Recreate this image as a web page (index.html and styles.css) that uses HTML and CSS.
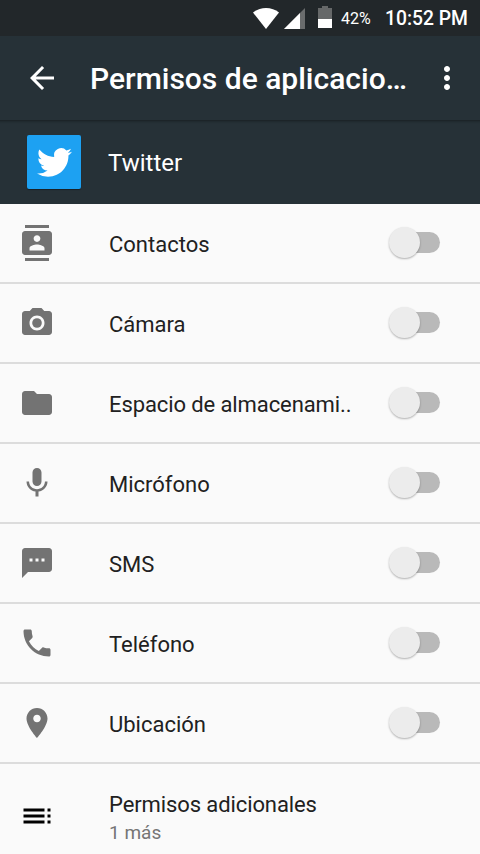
FILE: index.html
```
<!DOCTYPE html>
<html lang="es">
<head>
    <meta charset="UTF-8">
    <meta name="viewport" content="width=device-width, initial-scale=1.0">
    <title>Permisos de aplicaciones</title>
    <link rel="stylesheet" href="styles.css">
</head>
<body>
    <!-- Status bar -->
    <div class="status-bar">
        <svg class="wifi" width="26" height="21" viewBox="0 0 26 21"><path d="M13 21L0 4.6C3.6 1.6 8.1 0 13 0s9.4 1.6 13 4.6z" fill="#fff"/></svg>
        <svg class="signal" width="21" height="21" viewBox="0 0 21 21"><path d="M21 0v21H0z" fill="#6a6c6d"/><path d="M16 5v16H0z" fill="#fff"/></svg>
        <svg class="battery" width="14" height="22" viewBox="0 0 14 22"><path d="M4 0h6v2h4v20H0V2h4z" fill="#666869"/><path d="M0 13h14v9H0z" fill="#fff"/></svg>
        <span class="percent">42%</span>
        <span class="clock">10:52 PM</span>
    </div>

    <!-- Toolbar -->
    <header class="toolbar">
        <svg class="back" width="36" height="36" viewBox="0 0 24 24"><path d="M20 11H7.83l5.59-5.59L12 4l-8 8 8 8 1.41-1.41L7.83 13H20v-2z"/></svg>
        <h1>Permisos de aplicacio…</h1>
        <svg class="more" width="36" height="36" viewBox="0 0 24 24"><path d="M12 8c1.1 0 2-.9 2-2s-.9-2-2-2-2 .9-2 2 .9 2 2 2zm0 2c-1.1 0-2 .9-2 2s.9 2 2 2 2-.9 2-2-.9-2-2-2zm0 6c-1.1 0-2 .9-2 2s.9 2 2 2 2-.9 2-2-.9-2-2-2z"/></svg>
    </header>

    <!-- App name -->
    <div class="app">
        <div class="app-icon">
            <svg width="35" height="35" viewBox="0 0 24 24"><path d="M23.953 4.57a10 10 0 01-2.825.775 4.958 4.958 0 002.163-2.723c-.951.555-2.005.959-3.127 1.184a4.92 4.92 0 00-8.384 4.482C7.69 8.095 4.067 6.13 1.64 3.162a4.822 4.822 0 00-.666 2.475c0 1.71.87 3.213 2.188 4.096a4.904 4.904 0 01-2.228-.616v.06a4.923 4.923 0 003.946 4.827 4.996 4.996 0 01-2.212.085 4.936 4.936 0 004.604 3.417 9.867 9.867 0 01-6.102 2.105c-.39 0-.779-.023-1.17-.067a13.995 13.995 0 007.557 2.209c9.053 0 13.998-7.496 13.998-13.985 0-.21 0-.42-.015-.63A9.935 9.935 0 0024 4.59z"/></svg>
        </div>
        <span class="app-name">Twitter</span>
    </div>

    <!-- Permission list -->
    <ul class="permissions">
        <li>
            <svg class="icon" viewBox="0 0 24 24"><path d="M20 0H4v2h16V0zM4 24h16v-2H4v2zM20 4H4c-1.1 0-2 .9-2 2v12c0 1.1.9 2 2 2h16c1.1 0 2-.9 2-2V6c0-1.1-.9-2-2-2zm-8 2.750c1.240 0 2.250 1.010 2.250 2.250s-1.010 2.250-2.250 2.250S9.750 10.240 9.750 9 10.760 6.750 12 6.750zM17 17H7v-1.5c0-1.67 3.33-2.5 5-2.5s5 .83 5 2.5V17z"/></svg>
            <span class="name">Contactos</span>
            <span class="switch"></span>
        </li>
        <li>
            <svg class="icon" viewBox="0 0 24 24"><circle cx="12" cy="12" r="3.2"/><path d="M9 2L7.17 4H4c-1.1 0-2 .9-2 2v12c0 1.1.9 2 2 2h16c1.1 0 2-.9 2-2V6c0-1.1-.9-2-2-2h-3.17L15 2H9zm3 15c-2.76 0-5-2.24-5-5s2.24-5 5-5 5 2.24 5 5-2.24 5-5 5z"/></svg>
            <span class="name">Cámara</span>
            <span class="switch"></span>
        </li>
        <li>
            <svg class="icon" viewBox="0 0 24 24"><path d="M10 4H4c-1.1 0-1.99.9-1.99 2L2 18c0 1.1.9 2 2 2h16c1.1 0 2-.9 2-2V8c0-1.1-.9-2-2-2h-8l-2-2z"/></svg>
            <span class="name truncated">Espacio de almacenami..</span>
            <span class="switch"></span>
        </li>
        <li>
            <svg class="icon" viewBox="0 0 24 24"><path d="M12 14c1.66 0 2.99-1.34 2.99-3L15 5c0-1.66-1.34-3-3-3S9 3.34 9 5v6c0 1.66 1.34 3 3 3zm5.3-3c0 3-2.54 5.1-5.3 5.1S6.7 14 6.7 11H5c0 3.41 2.72 6.23 6 6.72V21h2v-3.28c3.28-.48 6-3.3 6-6.72h-1.7z"/></svg>
            <span class="name">Micrófono</span>
            <span class="switch"></span>
        </li>
        <li>
            <svg class="icon" viewBox="0 0 24 24"><path d="M20 2H4c-1.1 0-1.99.9-1.99 2L2 22l4-4h14c1.1 0 2-.9 2-2V4c0-1.1-.9-2-2-2zM9 11H7V9h2v2zm4 0h-2V9h2v2zm4 0h-2V9h2v2z"/></svg>
            <span class="name">SMS</span>
            <span class="switch"></span>
        </li>
        <li>
            <svg class="icon" viewBox="0 0 24 24"><path d="M6.62 10.79c1.44 2.83 3.76 5.14 6.59 6.59l2.2-2.2c.27-.27.67-.36 1.02-.24 1.12.37 2.33.57 3.57.57.55 0 1 .45 1 1V20c0 .55-.45 1-1 1-9.39 0-17-7.61-17-17 0-.55.45-1 1-1h3.5c.55 0 1 .45 1 1 0 1.25.2 2.45.57 3.57.11.35.03.74-.25 1.02l-2.2 2.2z"/></svg>
            <span class="name">Teléfono</span>
            <span class="switch"></span>
        </li>
        <li>
            <svg class="icon" viewBox="0 0 24 24"><path d="M12 2C8.13 2 5 5.13 5 9c0 5.25 7 13 7 13s7-7.75 7-13c0-3.87-3.13-7-7-7zm0 9.5c-1.38 0-2.5-1.12-2.5-2.5s1.12-2.5 2.5-2.5 2.5 1.12 2.5 2.5-1.12 2.5-2.5 2.5z"/></svg>
            <span class="name">Ubicación</span>
            <span class="switch"></span>
        </li>
        <li class="additional">
            <svg class="icon" viewBox="0 0 24 24"><path d="M3 9h14V7H3v2zm0 4h14v-2H3v2zm0 4h14v-2H3v2zm16 0h2v-2h-2v2zm0-10v2h2V7h-2zm0 6h2v-2h-2v2z"/></svg>
            <div>
                <span class="name">Permisos adicionales</span>
                <span class="summary">1 más</span>
            </div>
        </li>
    </ul>
</body>
</html>
```
FILE: styles.css
```
* {
    box-sizing: border-box;
}
body {
    font-family: Roboto, sans-serif;
    background-color: #fafafa;
    margin: 0;
    height: 854px;
    overflow: hidden;
}
svg {
    display: block;
    flex: none;
}
.status-bar {
    display: flex;
    align-items: center;
    justify-content: flex-end;
    height: 36px;
    padding-right: 13px;
    background: #22272a;
    color: #fff;
}
.signal {
    margin-left: 5px;
}
.battery {
    margin: 0 9px 2px 13px;
}
.percent {
    width: 30px;
    font-size: 16px;
    white-space: nowrap;
}
.clock {
    width: 82px;
    margin-left: 14px;
    padding-top: 1px;
    font-size: 19.3px;
    font-weight: 500;
    white-space: nowrap;
}
.toolbar {
    display: flex;
    align-items: center;
    height: 84px;
    padding: 0 15px 0 24px;
    background: #263137;
    color: #fff;
    fill: #fff;
}
.toolbar h1 {
    flex: 1;
    margin: 0 0 0 30px;
    padding-top: 2px;
    font-size: 30px;
    font-weight: 500;
    line-height: 40px;
    white-space: nowrap;
}
.app {
    display: flex;
    align-items: center;
    height: 84px;
    padding-left: 27px;
    background: #263137;
    box-shadow: inset 0 4px 3px -3px rgba(0, 0, 0, 0.4);
    color: #fff;
}
.app-icon {
    display: flex;
    align-items: center;
    justify-content: center;
    width: 54px;
    height: 54px;
    border-radius: 2px;
    background: #1da1f2;
    box-shadow: 0 1px 1px rgba(0, 0, 0, 0.35);
    fill: #fff;
}
.app-name {
    margin-left: 27px;
    padding-top: 2px;
    font-size: 24px;
}
.permissions {
    list-style: none;
    margin: 0;
    padding: 0;
}
.permissions li {
    display: flex;
    align-items: center;
    height: 80px;
    padding: 0 40px 0 19px;
    border-bottom: 2px solid #dcdcdc;
}
.icon {
    width: 36px;
    height: 36px;
    margin-right: 54px;
    fill: #737373;
}
.name {
    padding-top: 4px;
    font-size: 22px;
    line-height: 30px;
    color: #212121;
    white-space: nowrap;
}
.truncated {
    letter-spacing: -0.1px;
}
.switch {
    display: flex;
    align-items: center;
    width: 49px;
    height: 21px;
    margin: 0 0 1px auto;
    border-radius: 11px;
    background: #b9b9b9;
}
.switch::before {
    content: "";
    flex: none;
    width: 31px;
    height: 31px;
    margin-left: -2px;
    border-radius: 50%;
    background: #ececec;
    box-shadow: 0 1px 2px rgba(0, 0, 0, 0.3);
}
.permissions .additional {
    height: 90px;
    padding-top: 14px;
    border-bottom: none;
}
.additional .name,
.summary {
    display: block;
}
.additional .icon {
    fill: #000;
}
.additional .name {
    letter-spacing: -0.1px;
}
.summary {
    font-size: 19px;
    line-height: 26px;
    color: #757575;
}
```
